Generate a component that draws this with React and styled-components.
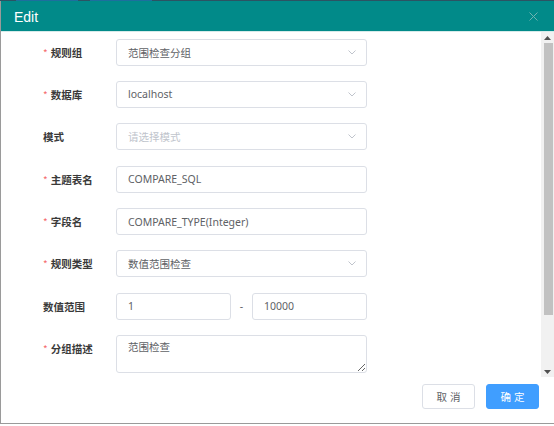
import React from "react";
import styled, { createGlobalStyle } from "styled-components";

const GlobalStyle = createGlobalStyle`
  html, body { margin: 0; padding: 0; background: #ffffff; }
  body { font-family: "Noto Sans", "Noto Sans CJK SC", sans-serif; }
  * { box-sizing: border-box; }
`;

const Backdrop = styled.div`
  display: flex;
  height: 1px;
  background: #2c5363;
`;

const BackdropTab = styled.span`
  width: ${(p) => p.$w}px;
  margin-left: ${(p) => p.$ml}px;
  background: #1d6f9e;
`;

const Dialog = styled.div`
  width: 554px;
  height: 423px;
  display: flex;
  flex-direction: column;
  border-left: 1px solid #9a9a9a;
  border-bottom: 1px solid #9a9a9a;
  background: #ffffff;
`;

const Header = styled.div`
  height: 31px;
  flex: none;
  display: flex;
  align-items: center;
  justify-content: space-between;
  padding: 0 16px 0 13px;
  background: #018a89;
  border-bottom: 1px solid #d6ebea;
`;

const Title = styled.span`
  font-family: "Liberation Sans", Arial, sans-serif;
  font-size: 14px;
  color: #ffffff;
  line-height: 1;
  padding-top: 1px;
`;

const Body = styled.div`
  flex: none;
  height: 345px;
  display: flex;
`;

const Form = styled.div`
  flex: 1;
  padding: 6.5px 0 0 42px;
  display: flex;
  flex-direction: column;
  gap: 15.4px;
  overflow: hidden;
`;

const Row = styled.div`
  display: flex;
  align-items: ${(p) => (p.$top ? "flex-start" : "center")};
`;

const Label = styled.div`
  width: 73px;
  height: 27px;
  display: flex;
  align-items: center;
  font-size: 10.5px;
  font-weight: 700;
  color: #3a3a3a;
  font-family: "Noto Sans CJK SC", sans-serif;
`;

const Star = styled.span`
  color: #f56c6c;
  font-size: 10px;
  font-weight: 400;
  margin-right: 3px;
`;

const Box = styled.div`
  width: ${(p) => p.$w || 251}px;
  height: ${(p) => p.$h || 27}px;
  border: 1px solid #dcdfe6;
  border-radius: 3px;
  display: flex;
  align-items: center;
  justify-content: space-between;
  padding: 0 10px 0 11px;
  font-size: 10.5px;
  color: ${(p) => (p.$placeholder ? "#c0c4cc" : "#606266")};
  background: #ffffff;
`;

const Area = styled.textarea`
  width: 251px;
  height: 38px;
  border: 1px solid #dcdfe6;
  border-radius: 3px;
  padding: 3px 11px;
  font-family: "Noto Sans", "Noto Sans CJK SC", sans-serif;
  font-size: 10.5px;
  color: #606266;
  resize: vertical;
  outline: none;
  margin: 0;
`;

const Dash = styled.span`
  width: 21px;
  text-align: center;
  font-size: 10.5px;
  color: #606266;
`;

const Scrollbar = styled.div`
  width: 13px;
  flex: none;
  display: flex;
  flex-direction: column;
  align-items: center;
  background: #f1f1f1;
`;

const ArrowBtn = styled.div`
  height: 11px;
  width: 100%;
  flex: none;
  display: flex;
  align-items: center;
  justify-content: center;
`;

const Thumb = styled.div`
  width: 9px;
  height: 272px;
  background: #c1c1c1;
  margin-left: 1px;
`;

const Spacer = styled.div`
  flex: 1;
`;

const Footer = styled.div`
  flex: 1;
  display: flex;
  justify-content: flex-end;
  align-items: flex-start;
  gap: 11px;
  padding: 7px 15px 0 0;
`;

const Button = styled.button`
  width: 53px;
  height: 25px;
  border-radius: 3px;
  border: 1px solid ${(p) => (p.$primary ? "#409eff" : "#dcdfe6")};
  background: ${(p) => (p.$primary ? "#409eff" : "#ffffff")};
  color: ${(p) => (p.$primary ? "#ffffff" : "#606266")};
  font-family: "Noto Sans CJK SC", sans-serif;
  font-size: 10.5px;
  letter-spacing: 3px;
  padding: 0 0 0 3px;
  margin: 0;
`;

const Chevron = () => (
  <svg width="8" height="5" viewBox="0 0 8 5">
    <polyline points="0.5,0.5 4,4 7.5,0.5" fill="none" stroke="#c0c4cc" strokeWidth="1" />
  </svg>
);

const Close = () => (
  <svg width="9" height="9" viewBox="0 0 9 9">
    <path d="M0.5 0.5 L8.5 8.5 M8.5 0.5 L0.5 8.5" stroke="#6fb2b1" strokeWidth="1" />
  </svg>
);

const Tri = ({ up }) => (
  <svg width="7" height="4" viewBox="0 0 7 4">
    <polygon points={up ? "0,4 7,4 3.5,0" : "0,0 7,0 3.5,4"} fill="#505050" />
  </svg>
);

const Field = ({ label, required, children, top }) => (
  <Row $top={top}>
    <Label>
      {required && <Star>*</Star>}
      {label}
    </Label>
    {children}
  </Row>
);

export default function App() {
  return (
    <>
      <GlobalStyle />
      <Backdrop>
        <BackdropTab $ml={16} $w={62} />
        <BackdropTab $ml={12} $w={62} />
      </Backdrop>
      <Dialog>
        <Header>
          <Title>Edit</Title>
          <Close />
        </Header>
        <Body>
          <Form>
            <Field label="规则组" required>
              <Box>
                范围检查分组
                <Chevron />
              </Box>
            </Field>
            <Field label="数据库" required>
              <Box>
                localhost
                <Chevron />
              </Box>
            </Field>
            <Field label="模式">
              <Box $placeholder>
                请选择模式
                <Chevron />
              </Box>
            </Field>
            <Field label="主题表名" required>
              <Box>COMPARE_SQL</Box>
            </Field>
            <Field label="字段名" required>
              <Box>COMPARE_TYPE(Integer)</Box>
            </Field>
            <Field label="规则类型" required>
              <Box>
                数值范围检查
                <Chevron />
              </Box>
            </Field>
            <Field label="数值范围">
              <Box $w={115}>1</Box>
              <Dash>-</Dash>
              <Box $w={115}>10000</Box>
            </Field>
            <Field label="分组描述" required top>
              <Area readOnly defaultValue="范围检查" />
            </Field>
          </Form>
          <Scrollbar>
            <ArrowBtn>
              <Tri up />
            </ArrowBtn>
            <Thumb />
            <Spacer />
            <ArrowBtn>
              <Tri />
            </ArrowBtn>
          </Scrollbar>
        </Body>
        <Footer>
          <Button>取消</Button>
          <Button $primary>确定</Button>
        </Footer>
      </Dialog>
    </>
  );
}
